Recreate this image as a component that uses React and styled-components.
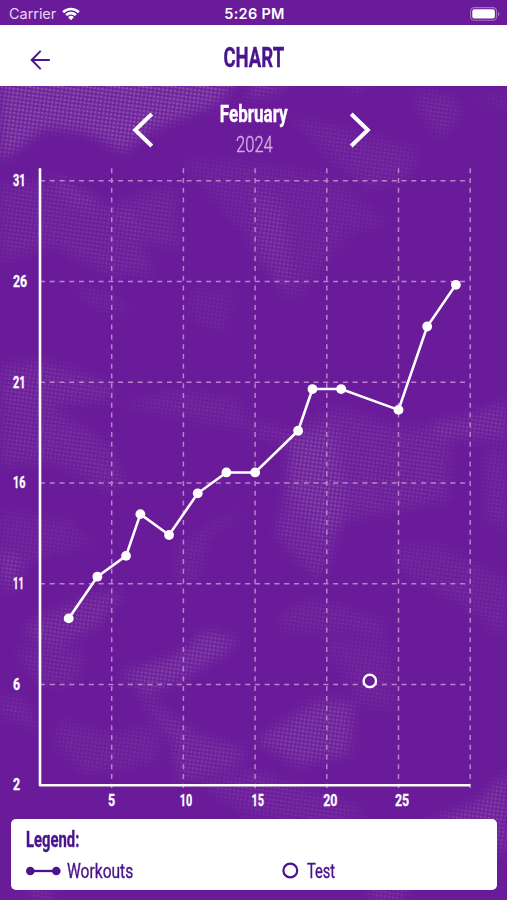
import React from 'react';
import styled, { createGlobalStyle, ThemeProvider } from 'styled-components';

const theme = {
  primary: '#6a1b9a',
  primaryDark: '#4a148c',
  light: '#ffffff',
  textFont: 'Roboto, "Liberation Sans", sans-serif',
  systemFont: 'Inter, "Liberation Sans", sans-serif',
};

const workouts = [
  [2, 10], [4, 12], [6, 13], [7, 15], [9, 14], [11, 16], [13, 17],
  [15, 17], [18, 19], [19, 21], [21, 21], [25, 20], [27, 24], [29, 26],
];
const tests = [[23, 7]];
const yLabels = [31, 26, 21, 16, 11, 6, 2];
const xLabels = [5, 10, 15, 20, 25, 30];

// the chart svg starts 160px below the top of the screen
const LEFT = 40;
const RIGHT = 470.2;
const TOP = 8.3;
const BOTTOM = 625.2;
const getX = (day) => LEFT + day * 14.34;
const getY = (value) => BOTTOM - (value - 2) * 20.85;
const getLabelWidth = (label) =>
  String(label).split('').reduce((sum, c) => sum + (c === '1' ? 5.4 : 7.1), 0);

const shades = [
  { points: '0,70 245,70 216,104 150,130 124,152 85,132 45,128 0,162', opacity: 0.85 },
  { points: '250,80 296,80 270,94 250,100', opacity: 0.6 },
  { points: '340,80 378,80 352,96', opacity: 0.3 },
  { points: '415,90 455,98 462,118 440,138 420,112', opacity: 0.35 },
  { points: '470,100 507,92 507,110', opacity: 0.25 },
  { points: '290,115 350,130 420,150 410,178 370,190 330,160', opacity: 0.32 },
  { points: '180,160 250,162 330,175 390,225 350,232 320,270 300,300 240,230', opacity: 0.26 },
  { points: '255,180 285,210 292,270 290,300 256,260', opacity: 0.32 },
  { points: '0,185 60,180 105,205 130,215 155,275 110,275 50,245 0,262', opacity: 0.35 },
  { points: '110,205 175,185 180,250 140,240', opacity: 0.35 },
  { points: '60,175 105,205 80,205 55,190', opacity: 0.35 },
  { points: '70,285 105,290 135,312 95,310', opacity: 0.25 },
  { points: '190,290 235,290 225,335 190,320', opacity: 0.22 },
  { points: '0,365 45,360 112,385 115,400 60,405 0,398', opacity: 0.42 },
  { points: '0,395 40,400 110,445 125,485 105,490 55,462 0,465', opacity: 0.38 },
  { points: '120,405 175,390 240,400 252,430 190,420', opacity: 0.3 },
  { points: '0,510 70,520 95,545 50,555 0,580', opacity: 0.25 },
  { points: '0,550 22,560 15,592 0,585', opacity: 0.5 },
  { points: '25,625 90,595 125,590 100,625 55,650 30,640', opacity: 0.5 },
  { points: '254,420 290,432 335,408 400,428 450,424 448,500 390,512 350,520 320,540 290,490 290,445 254,435', opacity: 0.38 },
  { points: '290,440 335,430 345,500 330,560 318,580 275,535 285,490', opacity: 0.45 },
  { points: '430,424 470,415 507,400 507,440 450,438', opacity: 0.5 },
  { points: '485,450 507,450 507,530 485,520', opacity: 0.3 },
  { points: '395,545 440,545 507,580 507,640 470,610 395,568', opacity: 0.3 },
  { points: '175,545 225,515 254,510 210,535 200,580 175,585', opacity: 0.26 },
  { points: '285,610 315,600 385,620 380,640 350,630 280,632', opacity: 0.32 },
  { points: '118,674 180,654 205,630 240,640 222,655 180,680 150,695', opacity: 0.65 },
  { points: '15,650 85,650 75,685 40,685', opacity: 0.35 },
  { points: '0,695 25,700 40,730 0,715', opacity: 0.35 },
  { points: '135,690 165,710 200,735 250,750 232,770 180,782 170,740', opacity: 0.45 },
  { points: '60,720 110,735 155,725 160,760 85,775 55,745', opacity: 0.3 },
  { points: '255,740 318,700 355,702 350,754 298,766', opacity: 0.6 },
  { points: '320,640 390,640 395,710 360,705', opacity: 0.25 },
  { points: '200,785 254,770 370,812 330,825 250,815', opacity: 0.35 },
  { points: '428,822 480,800 507,770 507,860 490,840', opacity: 0.6 },
  { points: '370,886 410,886 400,904 370,904', opacity: 0.45 },
  { points: '25,885 55,885 50,904 35,904', opacity: 0.4 },
];

const Halftone = () => (
  <HalftoneSvg width="507" height="900" viewBox="0 0 507 900" aria-hidden="true">
    <defs>
      <pattern id="dots" width="4" height="4" patternUnits="userSpaceOnUse" patternTransform="rotate(8)">
        <rect width="4" height="4" fill="#b889c4" opacity="0.18" />
        <circle cx="2" cy="2" r="1.35" fill="#b08abb" />
      </pattern>
      <filter id="soften" x="-20%" y="-20%" width="140%" height="140%">
        <feGaussianBlur stdDeviation="6" />
      </filter>
      <mask id="shade" maskUnits="userSpaceOnUse" x="0" y="0" width="507" height="900">
        <g filter="url(#soften)">
          {shades.map((shade) => (
            <polygon key={shade.points} points={shade.points} fill="#fff" opacity={shade.opacity * 0.58} />
          ))}
        </g>
      </mask>
    </defs>
    <rect width="507" height="900" fill="url(#dots)" mask="url(#shade)" />
  </HalftoneSvg>
);

const WifiIcon = () => (
  <svg width="18" height="14" viewBox="0 0 18 14">
    <path d="M0.2 4.3 A12.5 12.5 0 0 1 17.8 4.3 L15.9 6.2 A9.8 9.8 0 0 0 2.1 6.2 Z" fill="#fff" />
    <path d="M3.2 7.2 A8.3 8.3 0 0 1 14.8 7.2 L12.9 9.1 A5.6 5.6 0 0 0 5.1 9.1 Z" fill="#fff" />
    <path d="M6.1 10.2 A4.1 4.1 0 0 1 11.9 10.2 L9 13.2 Z" fill="#fff" />
  </svg>
);

const BatteryIcon = () => (
  <svg width="30" height="14" viewBox="0 0 30 14">
    <rect x="0.6" y="0.6" width="26" height="12.6" rx="3.7" fill="none" stroke="#a672c2" strokeWidth="1.1" />
    <rect x="2.3" y="2.3" width="22.6" height="9.2" rx="2.1" fill="#fff" />
    <path d="M28 4.7 Q29.5 5.4 29.5 6.9 Q29.5 8.4 28 9.1 Z" fill="#a672c2" />
  </svg>
);

const Chart = () => (
  <ChartSvg width="507" height="655" viewBox="0 0 507 655">
    {yLabels.map((label, i) => {
      const y = 20.8 + i * 100.73;
      return (
        <g key={label}>
          {label !== 2 && <GridLine x1={LEFT} x2={RIGHT} y1={y} y2={y} />}
          <AxisLabel x="13" y={y + 5.3} textLength={getLabelWidth(label)} lengthAdjust="spacingAndGlyphs">
            {label}
          </AxisLabel>
        </g>
      );
    })}
    {xLabels.map((label) => (
      <g key={label}>
        <GridLine x1={getX(label)} x2={getX(label)} y1={TOP} y2="628" />
        {label < 30 && (
          <AxisLabel x={getX(label) - 3.6} y="646.3" textLength={getLabelWidth(label)} lengthAdjust="spacingAndGlyphs">
            {label}
          </AxisLabel>
        )}
      </g>
    ))}
    <Line strokeLinejoin="round" points={`${LEFT},${TOP} ${LEFT},${BOTTOM} ${RIGHT},${BOTTOM}`} />
    <Line points={workouts.map(([day, value]) => `${getX(day)},${getY(value)}`).join(' ')} />
    {workouts.map(([day, value]) => (
      <circle key={day} cx={getX(day)} cy={getY(value)} r="4.9" fill="#fff" />
    ))}
    {tests.map(([day, value]) => (
      <circle key={day} cx={getX(day)} cy={getY(value)} r="6.2" fill="#6a1b9a" stroke="#fff" strokeWidth="2.4" />
    ))}
  </ChartSvg>
);

const App = () => (
  <ThemeProvider theme={theme}>
    <GlobalStyle />
    <Screen>
      <Halftone />
      <StatusBar>
        <Carrier>
          Carrier
          <WifiIcon />
        </Carrier>
        <Time>5:26 PM</Time>
        <BatteryIcon />
      </StatusBar>
      <Header>
        <BackButton aria-label="Back">
          <svg width="20" height="20" viewBox="0 0 20 20" fill="none" stroke="#4a148c" strokeWidth="2">
            <path d="M10.7 0.9 L1.7 10 L10.7 19.1 M1.7 10 H19.8" />
          </svg>
        </BackButton>
        <Title>
          <Narrow $size={28} $weight={700} $scale={0.663}>CHART</Narrow>
        </Title>
      </Header>
      <MonthPicker>
        <MonthButton aria-label="Previous month">
          <svg width="22" height="36" viewBox="0 0 22 36" fill="none" stroke="#fff" strokeWidth="4">
            <path d="M19.8 2 L3.2 18 L19.8 34" />
          </svg>
        </MonthButton>
        <MonthText>
          <Narrow $size={24} $weight={700} $scale={0.71}>February</Narrow>
          <Year $size={22} $weight={300} $scale={0.75}>2024</Year>
        </MonthText>
        <MonthButton aria-label="Next month">
          <svg width="22" height="36" viewBox="0 0 22 36" fill="none" stroke="#fff" strokeWidth="4">
            <path d="M2.2 2 L18.8 18 L2.2 34" />
          </svg>
        </MonthButton>
      </MonthPicker>
      <Chart />
      <Legend>
        <LegendTitle>
          <Narrow $left $size={21.5} $weight={700} $scale={0.69}>Legend:</Narrow>
        </LegendTitle>
        <LegendRow>
          <LegendItem $gap={6}>
            <svg width="35" height="10" viewBox="0 0 35 10" fill="#4a148c">
              <path d="M4 5 H31" stroke="#4a148c" strokeWidth="2.3" />
              <circle cx="4.3" cy="5" r="4.3" />
              <circle cx="30.3" cy="5" r="4.3" />
            </svg>
            <Narrow $left $size={20.5} $weight={400} $scale={0.76}>Workouts</Narrow>
          </LegendItem>
          <LegendItem $gap={8}>
            <svg width="17" height="17" viewBox="0 0 17 17">
              <circle cx="8.3" cy="8.5" r="6.9" fill="none" stroke="#4a148c" strokeWidth="2.2" />
            </svg>
            <Narrow $left $size={20.5} $weight={400} $scale={0.715}>Test</Narrow>
          </LegendItem>
        </LegendRow>
      </Legend>
    </Screen>
  </ThemeProvider>
);

const GlobalStyle = createGlobalStyle`
  * {
    box-sizing: border-box;
  }
  body {
    margin: 0;
    background: #6a1b9a;
  }
`;

const Screen = styled.div`
  position: relative;
  isolation: isolate;
  display: flex;
  flex-direction: column;
  width: 507px;
  height: 900px;
  overflow: hidden;
  background: ${({ theme }) => theme.primary};
  color: ${({ theme }) => theme.light};
  font-family: ${({ theme }) => theme.textFont};
`;

const HalftoneSvg = styled.svg`
  position: absolute;
  top: 0;
  left: 0;
  z-index: -1;
`;

const Narrow = styled.span`
  display: inline-block;
  font-size: ${({ $size }) => $size}px;
  font-weight: ${({ $weight }) => $weight};
  line-height: 30px;
  white-space: nowrap;
  transform: scaleX(${({ $scale }) => $scale});
  transform-origin: ${({ $left }) => ($left ? 'left' : 'center')};
  -webkit-text-stroke: 0.4px currentColor;
`;

const StatusBar = styled.div`
  display: grid;
  grid-template-columns: 1fr auto 1fr;
  align-items: center;
  height: 25px;
  padding: 2px 7px 0 9px;
  background: ${({ theme }) => theme.primary};
  font-family: ${({ theme }) => theme.systemFont};
  font-size: 14.5px;

  > svg {
    justify-self: end;
  }
`;

const Carrier = styled.div`
  display: flex;
  align-items: center;
  gap: 6px;
  color: #e6d5ee;
  letter-spacing: -0.05px;
`;

const Time = styled.div`
  font-weight: 600;
  letter-spacing: 0.3px;
`;

const Header = styled.div`
  display: grid;
  grid-template-columns: 60px 1fr 60px;
  align-items: center;
  height: 61px;
  padding-top: 4px;
  background: ${({ theme }) => theme.light};
  color: ${({ theme }) => theme.primaryDark};
`;

const BackButton = styled.button`
  display: flex;
  padding: 4px 0 0 30px;
  border: 0;
  background: none;
`;

const Title = styled.div`
  text-align: center;
`;

const MonthPicker = styled.div`
  display: flex;
  justify-content: center;
  gap: 29px;
  height: 74px;
  padding-right: 5px;
`;

const MonthButton = styled.button`
  display: flex;
  align-items: center;
  height: 88px;
  padding: 0;
  border: 0;
  background: none;
`;

const MonthText = styled.div`
  display: flex;
  flex-direction: column;
  align-items: center;
  width: 137px;
  padding: 13px 0 0 6px;
`;

const Year = styled(Narrow)`
  color: #d0aedf;
  line-height: 31px;
`;

const ChartSvg = styled.svg`
  display: block;
  flex: none;
`;

const GridLine = styled.line`
  stroke: #b983c9;
  stroke-width: 1.5;
  stroke-dasharray: 5 4.77;
`;

const Line = styled.polyline`
  fill: none;
  stroke: ${({ theme }) => theme.light};
  stroke-width: 2.6;
`;

const AxisLabel = styled.text`
  fill: ${({ theme }) => theme.light};
  stroke: ${({ theme }) => theme.light};
  stroke-width: 0.3;
  font-size: 17px;
  font-weight: 700;
`;

const Legend = styled.div`
  height: 71px;
  margin: 4px 10px 0 11px;
  padding: 6px 14.5px 0;
  border-radius: 5px;
  background: ${({ theme }) => theme.light};
  color: ${({ theme }) => theme.primaryDark};
`;

const LegendTitle = styled.div`
  height: 30px;
`;

const LegendRow = styled.div`
  display: grid;
  grid-template-columns: 256px 1fr;
  height: 31px;
`;

const LegendItem = styled.div`
  display: flex;
  align-items: center;
  gap: ${({ $gap }) => $gap}px;
`;

export default App;
